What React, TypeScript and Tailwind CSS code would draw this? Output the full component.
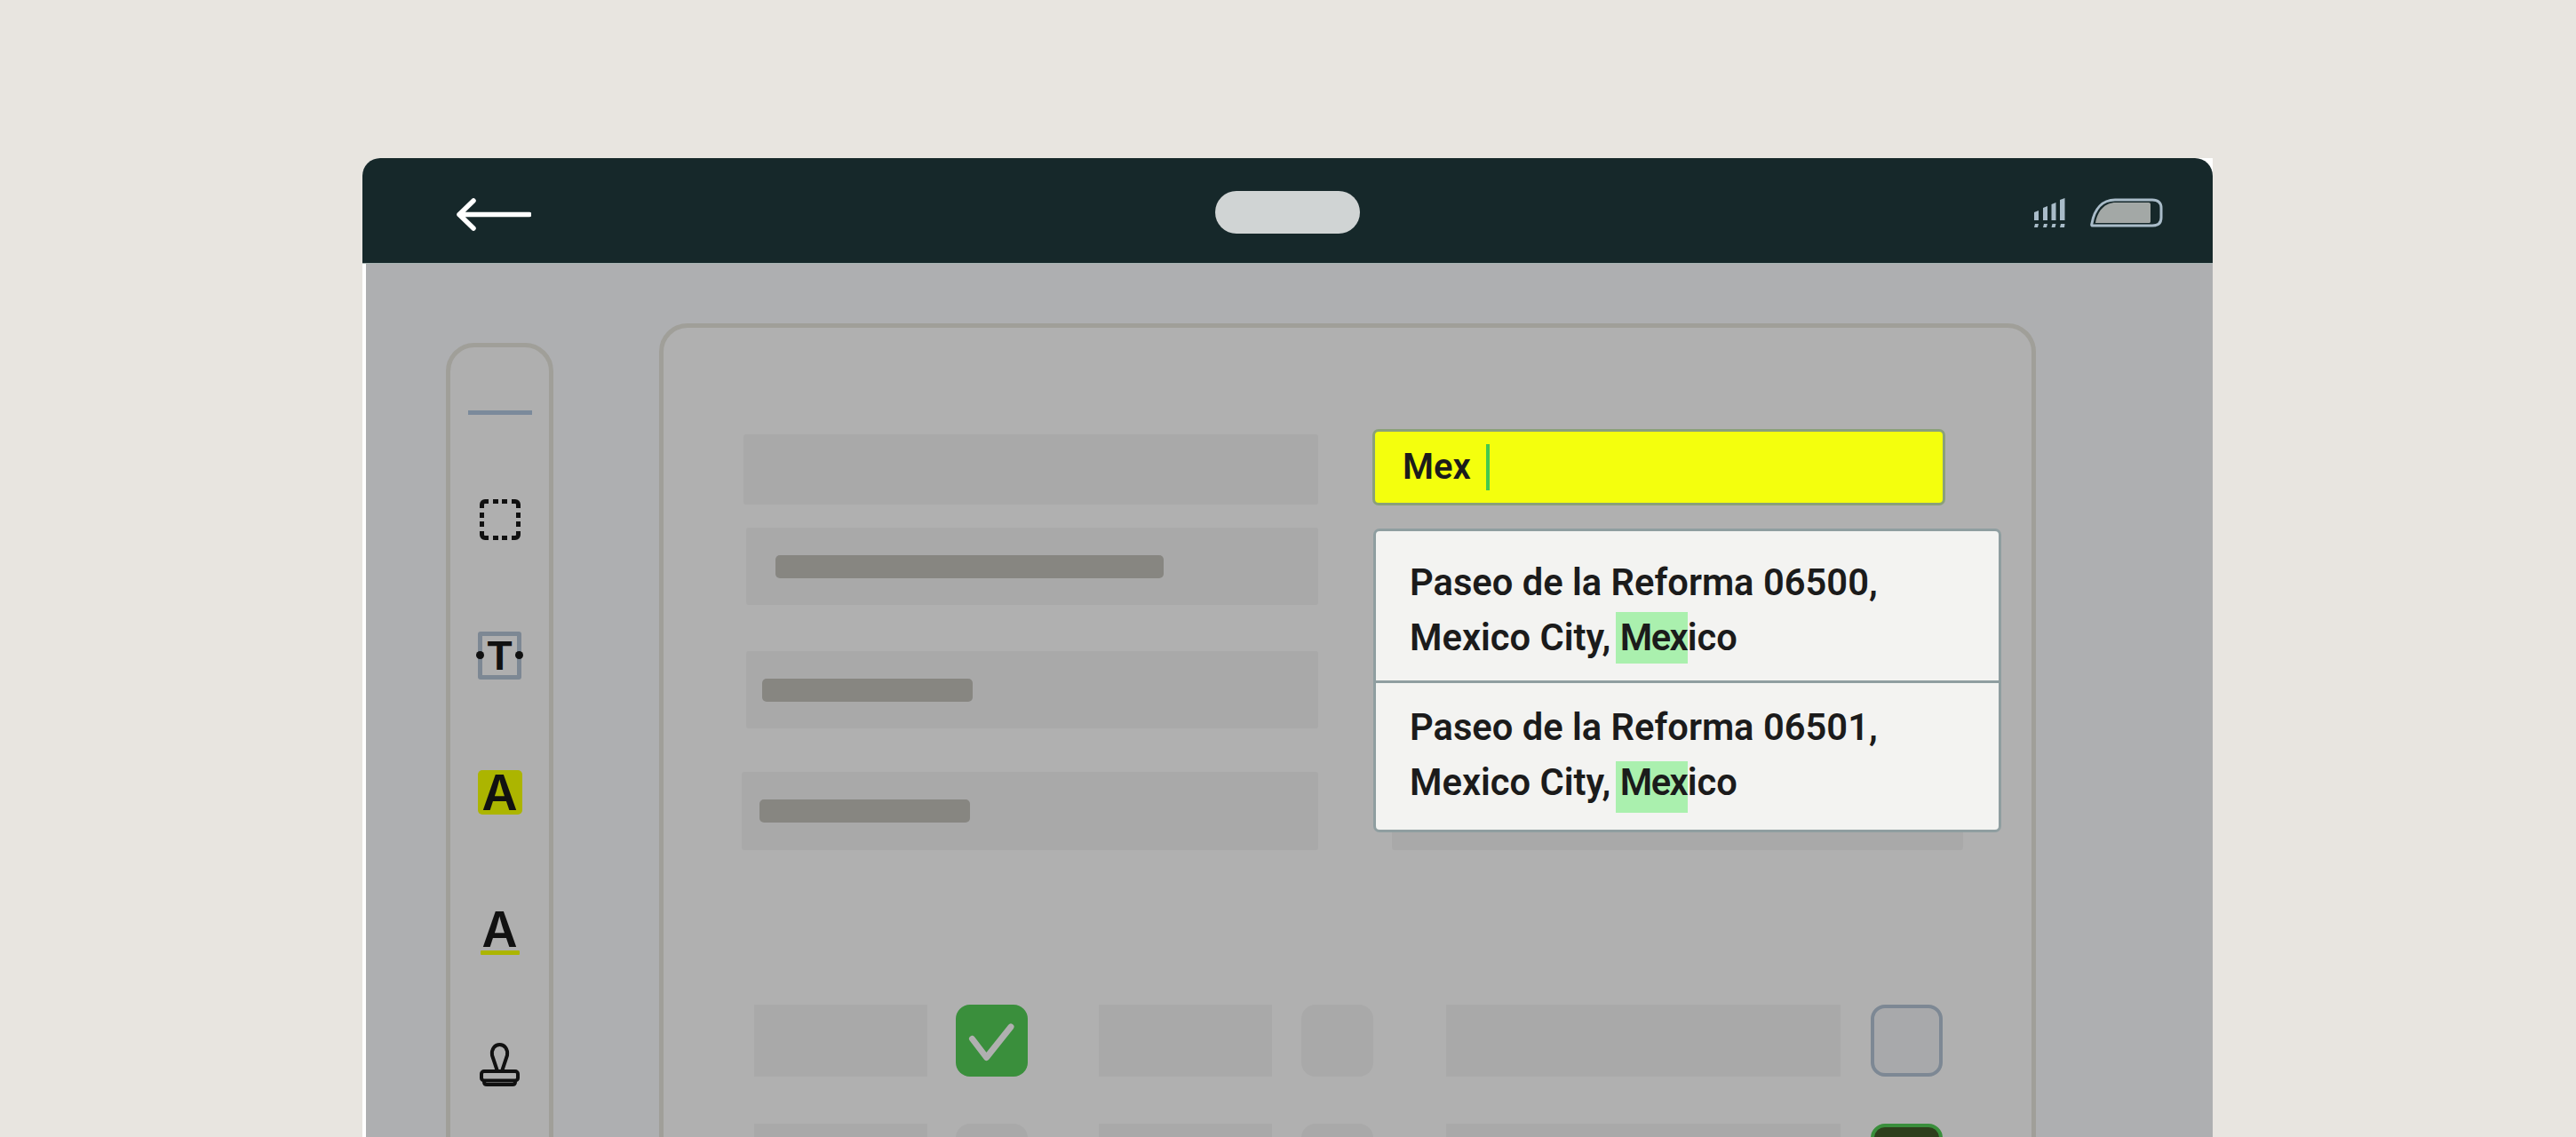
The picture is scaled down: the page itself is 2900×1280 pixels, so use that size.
import React from 'react';

const textFont = "font-['Roboto','Liberation_Sans',sans-serif]";

const BackArrow = () => (
    <svg width="85" height="37" viewBox="0 0 85 37" fill="none" stroke="#ffffff" strokeWidth="5.500" strokeLinecap="round" strokeLinejoin="round">
        <path d="M83 18.500H4M20 3L4 18.500L20 34" />
    </svg>
);

const SignalIcon = () => (
    <svg width="35" height="33" viewBox="0 0 35 33" fill="#a9bcc9">
        <path d="M0 16L5 14V25H0Z" />
        <path d="M10 11L15 9V25H10Z" />
        <path d="M19.500 7L24.500 5V25H19.500Z" />
        <path d="M29 2L34.500 0V25H29Z" />
        <path d="M1 29H5L4 33H0Z" />
        <path d="M11 29H15L14 33H10Z" />
        <path d="M20.500 29H24.500L23.500 33H19.500Z" />
        <path d="M30 29H34.500L34 33H29Z" />
    </svg>
);

const BatteryIcon = () => (
    <svg width="82" height="33" viewBox="0 0 82 33" fill="none">
        <path d="M2.500 31C1.500 31 1.500 30 2 28.500C5 12 14 2 28 2H70C76.500 2 80 5.500 80 11V22C80 28 76.500 31 70 31Z" stroke="#a9bcc9" strokeWidth="3" />
        <path d="M6 28C8 15 16 5 29 5H66C67.500 5 68 6 68 7V26C68 27.500 67.500 28 66 28Z" fill="#a3a8a6" />
    </svg>
);

const DashedSquare = () => (
    <svg width="46" height="46" viewBox="0 0 46 46" fill="none" stroke="#111111" strokeWidth="5">
        {/* solid corners */}
        <path d="M2.500 10V6C2.500 4 4 2.500 6 2.500H10" />
        <path d="M36 2.500H40C42 2.500 43.500 4 43.500 6V10" />
        <path d="M43.500 36V40C43.500 42 42 43.500 40 43.500H36" />
        <path d="M10 43.500H6C4 43.500 2.500 42 2.500 40V36" />
        {/* dashes between them */}
        <path d="M15 2.500H21M25 2.500H31M15 43.500H21M25 43.500H31M2.500 15V21M2.500 25V31M43.500 15V21M43.500 25V31" />
    </svg>
);

const StampIcon = () => (
    <svg width="45" height="49" viewBox="0 0 45 49" fill="none" stroke="#111111" strokeWidth="4" strokeLinejoin="round">
        <path d="M20 32L14 14C13 7 17 2 22.500 2C28 2 32 7 31 14L25 32" />
        <rect x="2" y="32" width="41" height="10.500" rx="3" />
        <path d="M5 42.500V44C5 46 6 47 8 47H37C39 47 40 46 40 44V42.500" />
    </svg>
);

const CheckMark = () => (
    <svg width="81" height="81" viewBox="0 0 81 81" fill="none" stroke="#b0b0b0" strokeWidth="7" strokeLinecap="round" strokeLinejoin="round">
        <path d="M18.500 38.500L34.500 59.500L62 25" />
    </svg>
);

const Toolbar = () => (
    <div className="mt-[22px] flex h-[1200px] w-[121px] shrink-0 flex-col items-center rounded-[32px] border-[5px] border-[#a09f99] bg-[#afafaf] pt-[71px]">
        <div className="h-[5px] w-[72px] bg-[#7b8a9b]" />
        <div className="mt-[95px] flex">
            <DashedSquare />
        </div>
        <div className="relative mt-[103px] flex h-[54px] w-[49px] items-center justify-center rounded-[3px] border-[5px] border-[#7d8894]">
            <span className="font-['Liberation_Sans',sans-serif] text-[46px] leading-none font-bold text-[#111111]">T</span>
            <span className="absolute top-[17px] left-[-7px] size-[9px] rounded-full bg-[#111111]" />
            <span className="absolute top-[17px] right-[-7px] size-[9px] rounded-full bg-[#111111]" />
        </div>
        <div className="mt-[102px] flex h-[50px] w-[50px] items-center justify-center rounded-[5px] bg-[#acb500]">
            <span className="font-['Inter',sans-serif] text-[55px] leading-none font-semibold text-[#111111]">A</span>
        </div>
        <div className="mt-[108px] flex h-[50px] w-[44px] flex-col items-center">
            <span className="h-[45px] font-['Inter',sans-serif] text-[55px] leading-[42px] font-semibold text-[#111111]">A</span>
            <span className="h-[5px] w-[44px] rounded-[1px] bg-[#acb500]" />
        </div>
        <div className="mt-[99px] flex">
            <StampIcon />
        </div>
    </div>
);

const Field = ({ className, barClass }: { className: string; barClass?: string }) => (
    <div className={`flex items-center rounded-[3px] bg-[#a9a9a9] ${className}`}>
        {barClass && <div className={`h-[26px] rounded-[5px] bg-[#878681] ${barClass}`} />}
    </div>
);

const Suggestion = ({ zip, className, markClass }: { zip: string; className: string; markClass: string }) => (
    <div className={`pr-[39px] pl-[38px] ${className}`}>
        <p className="text-[41.700px] leading-[62px] font-semibold whitespace-nowrap text-[#1b1b1b]">Paseo de la Reforma {zip},</p>
        <p className="text-[41.700px] leading-[62px] font-semibold whitespace-nowrap text-[#1b1b1b]">
            Mexico City, <span className={`ml-[-5px] inline-block h-[58px] w-[81px] bg-[#aaf0ae] pl-[5px] tracking-[-1.500px] ${markClass}`}>Mex</span>ico
        </p>
    </div>
);

const CheckRow = ({ first }: { first?: boolean }) => (
    <div className="flex h-[81px] shrink-0 items-stretch">
        <div className="w-[195px] bg-[#a9a9a9]" />
        {first ? (
            <div className="ml-[32px] w-[81px] rounded-[16px] bg-[#3a8f3c]">
                <CheckMark />
            </div>
        ) : (
            <div className="ml-[32px] w-[81px] rounded-[16px] bg-[#a9a9a9]" />
        )}
        <div className="ml-[80px] w-[195px] bg-[#a9a9a9]" />
        <div className="ml-[33px] w-[81px] rounded-[16px] bg-[#a9a9a9]" />
        <div className="ml-[82px] w-[444px] bg-[#a9a9a9]" />
        {first ? (
            <div className="ml-[34px] w-[81px] rounded-[16px] border-4 border-[#7d8894] bg-[#a8a9ab]" />
        ) : (
            <div className="ml-[34px] w-[81px] rounded-[16px] border-4 border-[#3a8f3c] bg-[#2e3f1c]" />
        )}
    </div>
);

export default function App() {
    return (
        <div className={`h-[1280px] w-[2900px] overflow-hidden bg-[#e8e5e0] pt-[178px] pl-[408px] ${textFont}`}>
            <div className="w-[2083px] rounded-tl-[20px] bg-white">
                {/* Top bar */}
                <div className="grid h-[119px] grid-cols-3 items-center rounded-t-[20px] border-b border-[#a9b5b3] bg-[#16282a] pt-[4px]">
                    <div className="flex pt-[4px] pl-[105px]">
                        <BackArrow />
                    </div>
                    <div className="flex justify-center">
                        <div className="h-[48px] w-[163px] rounded-full bg-[#d0d4d4]" />
                    </div>
                    <div className="flex items-center justify-end gap-[28px] pr-[56px]">
                        <SignalIcon />
                        <BatteryIcon />
                    </div>
                </div>

                {/* Dimmed page */}
                <div className="ml-[4px] flex h-[984px] items-start gap-[119px] overflow-hidden bg-[#aeafb1] pt-[67px] pl-[90px]">
                    <Toolbar />
                    <div className="h-[1200px] w-[1550px] shrink-0 rounded-[32px] border-[5px] border-[#a09f99] bg-[#b0b0b0] pt-[114px]">
                        <div className="flex items-start pl-[90px]">
                            <div className="flex w-[647px] flex-col pt-[6px]">
                                <Field className="h-[79px] w-full" />
                                <Field className="mt-[26px] ml-[3px] h-[87px] w-[644px] pl-[33px]" barClass="w-[437px]" />
                                <Field className="mt-[52px] ml-[3px] h-[87px] w-[644px] pl-[18px]" barClass="w-[237px]" />
                                <Field className="mt-[49px] ml-[-2px] h-[88px] w-[649px] pl-[20px]" barClass="w-[237px]" />
                            </div>

                            <div className="relative ml-[61px] w-[645px]">
                                <div className="flex h-[86px] items-center rounded-[7px] border-[3px] border-[#8aa07a] bg-[#f4ff0d] pl-[31px]">
                                    <span className="text-[40px] leading-none font-semibold text-[#1b1b1b]">Mex</span>
                                    <span className="ml-[17px] h-[52px] w-[4px] bg-[#43c94f]" />
                                </div>
                                <Field className="mt-[300px] ml-[22px] h-[88px] w-[643px]" />

                                {/* Suggestions */}
                                <div className="absolute top-[112px] left-[1px] h-[342px] w-[707px] rounded-[7px] border-[3px] border-[#8f9ea0] bg-[#f3f3f1]">
                                    <Suggestion zip="06500" className="h-[171px] border-b-[3px] border-[#8f9ea0] pt-[27px]" markClass="leading-[58px]" />
                                    <Suggestion zip="06501" className="pt-[19px]" markClass="leading-[48px]" />
                                </div>
                            </div>
                        </div>

                        <div className="mt-[174px] flex flex-col gap-[53px] pl-[102px]">
                            <CheckRow first />
                            <CheckRow />
                        </div>
                    </div>
                </div>
            </div>
        </div>
    );
}
